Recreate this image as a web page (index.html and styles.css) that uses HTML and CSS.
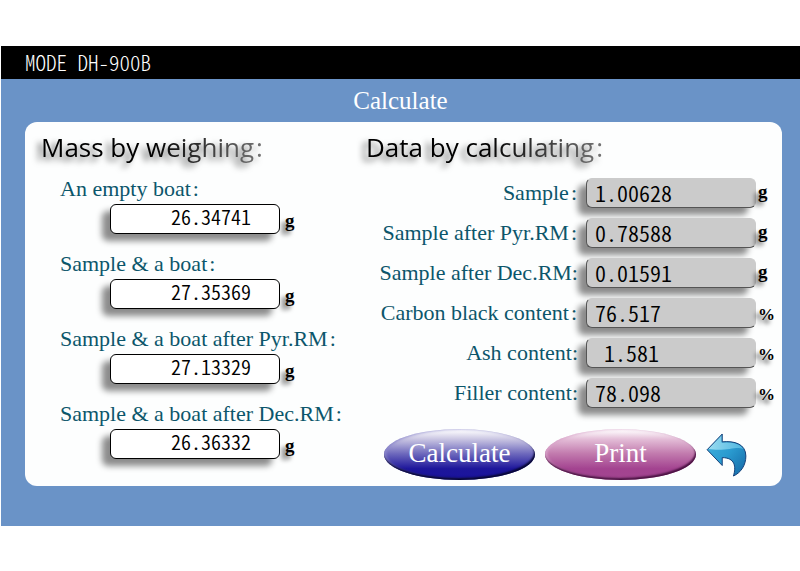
FILE: index.html
```html
<!DOCTYPE html>
<html lang="en">
<head>
<meta charset="utf-8">
<title>MODE DH-900B</title>
<link rel="stylesheet" href="styles.css">
</head>
<body>
<div class="screen">
  <header class="bar">MODE DH-900B</header>
  <h1 class="title">Calculate</h1>
  <main class="card">
    <section class="mass">
      <h2 class="heading">Mass by weighing<span class="colon">:</span></h2>
      <div class="weigh">
        <label for="empty">An empty boat<span class="wide">:</span></label>
        <div class="entry"><input class="box" id="empty" value="26.34741"><span class="unit">g</span></div>
      </div>
      <div class="weigh">
        <label for="boat">Sample &amp; a boat<span class="wide">:</span></label>
        <div class="entry"><input class="box" id="boat" value="27.35369"><span class="unit">g</span></div>
      </div>
      <div class="weigh">
        <label for="pyr">Sample &amp; a boat after Pyr.RM<span class="wide">:</span></label>
        <div class="entry"><input class="box" id="pyr" value="27.13329"><span class="unit">g</span></div>
      </div>
      <div class="weigh">
        <label for="dec">Sample &amp; a boat after Dec.RM<span class="wide">:</span></label>
        <div class="entry"><input class="box" id="dec" value="26.36332"><span class="unit">g</span></div>
      </div>
    </section>
    <section class="data">
      <h2 class="heading">Data by calculating<span class="colon">:</span></h2>
      <div class="results">
        <label for="r1">Sample<span class="wide">:</span></label><input class="box result" id="r1" value="1.00628" readonly><span class="unit">g</span>
        <label for="r2">Sample after Pyr.RM<span class="wide">:</span></label><input class="box result" id="r2" value="0.78588" readonly><span class="unit">g</span>
        <label for="r3">Sample after Dec.RM:</label><input class="box result" id="r3" value="0.01591" readonly><span class="unit">g</span>
        <label for="r4">Carbon black content<span class="wide">:</span></label><input class="box result" id="r4" value="76.517" readonly><span class="unit percent">%</span>
        <label for="r5">Ash content:</label><input class="box result short" id="r5" value="1.581" readonly><span class="unit percent">%</span>
        <label for="r6">Filler content:</label><input class="box result" id="r6" value="78.098" readonly><span class="unit percent">%</span>
      </div>
      <div class="actions">
        <button class="pill blue" type="button">Calculate</button>
        <button class="pill pink" type="button">Print</button>
        <button class="back" type="button" aria-label="Back">
          <svg viewBox="0 0 124 134" width="41" height="44">
            <defs>
              <linearGradient id="body" x1="0" y1="0" x2="1" y2="1">
                <stop offset="0" stop-color="#45b4df"/><stop offset=".5" stop-color="#2a9bd0"/><stop offset="1" stop-color="#1466a4"/>
              </linearGradient>
              <linearGradient id="shine" x1="0" y1="0" x2="1" y2="0">
                <stop offset="0" stop-color="#9adcf0"/><stop offset="1" stop-color="#4db5e0"/>
              </linearGradient>
            </defs>
            <path d="M3 51 49 3V27C86 23 121 34 121 70C121 98 106 121 83 131C92 103 88 75 49 75V99Z" fill="url(#body)"/>
            <path d="M6 49 47 7V30C80 26 104 33 113 48C88 40 62 57 6 49Z" fill="url(#shine)"/>
            <path d="M3 51 49 3V27C86 23 121 34 121 70C121 98 106 121 83 131C92 103 88 75 49 75V99Z" fill="none" stroke="#143f78" stroke-width="3" stroke-linejoin="round"/>
          </svg>
        </button>
      </div>
    </section>
  </main>
</div>
</body>
</html>
```
FILE: styles.css
```css
* { box-sizing: border-box; }
body { margin: 46px 0 0 1px; background: #fff; font-family: "Liberation Serif", serif; }
.screen { background: #6a93c7; padding-bottom: 40px; }
.bar {
  background: #000; color: #fff; height: 33px; line-height: 33px; padding-left: 24px;
  font-family: "Noto Sans CJK SC", sans-serif; font-size: 21px; font-weight: 300; font-feature-settings: "hwid";
}
.title { margin: 0; text-align: center; color: #fff; font-size: 25px; font-weight: 400; line-height: 43px; }
.card {
  margin: 0 18px 0 24px; background: #fdfefe; border-radius: 12px;
  display: grid; grid-template-columns: 325px 1fr; padding: 7px 6px 6px 16px;
}
.heading {
  margin: 0; font: 400 26px/36px "Open Sans", sans-serif;
  width: max-content; color: transparent;
  background: linear-gradient(100deg, #000 50%, #777 100%); background-clip: text;
  filter: drop-shadow(-5px 4px 3px rgba(0, 0, 0, .6));
}
.colon { padding-left: 2px; }
.weigh { height: 75px; padding-left: 19px; }
.mass .heading { margin-bottom: 12px; }
label { color: #0c566b; font-size: 22px; line-height: 24px; white-space: nowrap; }
.weigh label { display: block; height: 27px; }
.wide { padding: 0 3px 0 2px; }
.entry { display: flex; gap: 5px; padding-left: 50px; }
.box {
  width: 170px; height: 30px; border: 1px solid #000; border-radius: 6px; background: #fff; color: #000;
  box-shadow: -8px 7px 6px rgba(0, 0, 0, .45); padding: 0 28px 5px 8px; text-align: right;
  font-family: "Noto Sans CJK SC", sans-serif; font-size: 20px; font-weight: 350; font-feature-settings: "hwid";
}
.unit { font-size: 19px; font-weight: 700; line-height: 34px; text-shadow: -4px 4px 4px rgba(0, 0, 0, .6); }
.data .heading { margin-bottom: 13px; }
.results { display: grid; grid-template-columns: 1fr 170px 20px; grid-auto-rows: 30px; row-gap: 10px; }
.results label { text-align: right; padding: 3px 8px 0 0; }
.results .wide { padding-right: 1px; }
.results .unit { padding-left: 2px; line-height: 28px; }
.results .percent { font-size: 17px; line-height: 34px; }
.result {
  background: #cbcbcb; border-color: #cbcbcb #cbcbcb #555 #555; text-align: left;
  padding: 0 8px 3px; font-size: 22px;
}
.short { padding-left: 17px; }
.actions { display: flex; align-items: center; gap: 10px; padding: 21px 0 0 18px; }
.pill {
  width: 151px; height: 51px; border: 0; border-radius: 50%; color: #fff; padding: 0 0 3px;
  font-family: inherit; font-size: 27px;
}
.blue {
  background: linear-gradient(#fff 2%, #c9c5e2 20%, #6f6abd 48%, #1d169b 78%, #1a139c);
  box-shadow: inset -1px -2px 2px #050530, inset 2px 0 3px #8c88cc;
}
.pink {
  background: linear-gradient(#fff 2%, #e3bdd7 20%, #c27bae 48%, #a34390 78%, #a24590);
  box-shadow: inset -1px -2px 2px #481040, inset 2px 0 3px #d9a4ca;
}
.back { border: 0; background: none; padding: 0; display: flex; }
```
